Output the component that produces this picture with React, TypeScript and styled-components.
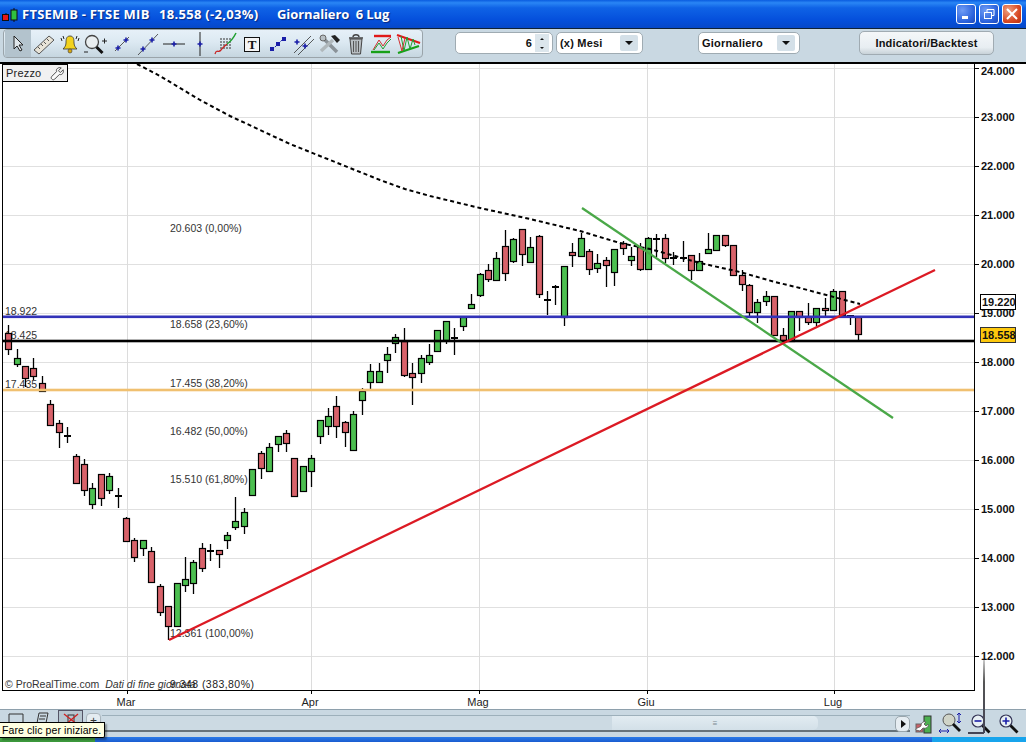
import React from 'react';
import styled, { createGlobalStyle } from 'styled-components';

const Global = createGlobalStyle`
  html, body { margin: 0; padding: 0; background: #fff; overflow: hidden; }
  #root { width: 1026px; height: 742px; }
`;

const Win = styled.div`
  position: relative; width: 1026px; height: 742px; overflow: hidden;
  display: flex; flex-direction: column; background: #fff;
  font-family: "Liberation Sans", Arial, sans-serif;
`;
const TitleBar = styled.header`
  height: 28px; flex: none; display: flex; align-items: center; padding: 0 4px 0 2px; box-sizing: border-box;
  background: linear-gradient(180deg, #0a5ce0 0%, #2a86f5 10%, #0f63e6 28%, #0550dc 70%, #0648c8 100%);
  color: #fff; font: bold 13px "Open Sans", "Noto Sans", sans-serif;
  text-shadow: 1px 1px 1px #0a2a80;
`;
const TitleText = styled.span<{ $w: number; $ls: number }>`
  width: ${p => p.$w}px; flex: none; white-space: pre; letter-spacing: ${p => p.$ls}px;
`;
const WinBtns = styled.div`margin-left: auto; display: flex; gap: 3px;`;
const WinBtn = styled.div<{ $close?: boolean }>`
  width: 20px; height: 20px; box-sizing: border-box; border: 1px solid #fff; border-radius: 3px;
  display: flex; align-items: center; justify-content: center;
  background: ${p => p.$close
    ? 'radial-gradient(circle at 30% 30%, #f0a080, #d84a24 60%, #b83010)'
    : 'radial-gradient(circle at 30% 30%, #6f9cf5, #2b62dc 65%, #1d48b8)'};
`;
const Toolbar = styled.div`
  height: 36px; flex: none; box-sizing: border-box; display: flex; align-items: center; padding: 0 0 5px 3px;
  background: #c9d8e2; border-top: 1px solid #123; border-bottom: 2px solid #000;
`;
const ToolGroup = styled.div`
  width: 420px; height: 29px; box-sizing: border-box; display: flex; align-items: center; padding-left: 1px;
  border: 1px solid #9aa4aa; border-radius: 4px; flex: none; margin-top: 1px;
  background: linear-gradient(180deg, #e6f0f8 0%, #dce9f2 45%, #c6d6e0 100%);
`;
const Tool = styled.div<{ $active?: boolean }>`
  width: 26px; height: 27px; flex: none; display: flex; align-items: center; justify-content: center;
  background: ${p => p.$active ? '#b3c3cd' : 'transparent'};
`;
const Field = styled.div<{ $w: number; $ml: number }>`
  width: ${p => p.$w}px; margin-left: ${p => p.$ml}px; height: 22px; flex: none; box-sizing: border-box;
  display: flex; align-items: center; background: #fff; border: 1px solid #9fabb2; border-radius: 5px;
  font-size: 11px; font-weight: bold; color: #111; padding: 0 3px; letter-spacing: .2px;
`;
const FieldValue = styled.span<{ $right?: boolean }>`
  flex: 1; text-align: ${p => p.$right ? 'right' : 'left'}; padding-right: ${p => p.$right ? '3px' : 0};
`;
const Spin = styled.div`
  width: 14px; height: 18px; flex: none; background: #dce6ec; display: flex; flex-direction: column;
  align-items: center; justify-content: space-around;
`;
const Caret = styled.div`
  width: 18px; height: 16px; flex: none; margin-right: 1px; border-radius: 2px; background: #d4e0e8; display: flex; align-items: center; justify-content: center;
`;
const Tri = styled.i<{ $up?: boolean; $s: number }>`
  display: block; width: 0; height: 0;
  border-left: ${p => p.$s}px solid transparent; border-right: ${p => p.$s}px solid transparent;
  ${p => p.$up ? `border-bottom: ${p.$s}px solid #111;` : `border-top: ${p.$s}px solid #111;`}
`;
const TriRight = styled.i`
  display: block; width: 0; height: 0; margin-left: 2px;
  border-top: 4px solid transparent; border-bottom: 4px solid transparent; border-left: 5px solid #111;
`;
const ActionBtn = styled.div`
  width: 135px; height: 24px; margin-left: 59px; flex: none; box-sizing: border-box; display: flex;
  align-items: center; justify-content: center; border: 1px solid #a0abb2; border-radius: 5px;
  font-size: 11px; font-weight: bold; color: #111; letter-spacing: .2px;
  background: linear-gradient(180deg, #f4f7f9 0%, #e8eef2 70%, #c8d2d8 100%);
`;
const ChartWrap = styled.main`position: relative; height: 645px; flex: none;`;
const ChartSvg = styled.svg`display: block; width: 1026px; height: 645px;`;
const Legend = styled.div`
  position: absolute; left: 2px; top: 0; width: 66px; height: 18px; box-sizing: border-box;
  border: 1px solid #000; background: #f1f1f1; display: flex; align-items: center;
  justify-content: space-between; padding: 0 2px 0 3px; font-size: 11px; color: #222; letter-spacing: .2px;
`;
const BottomBar = styled.footer`
  height: 28px; flex: none; box-sizing: border-box; display: flex; align-items: center; background: #c9d8e2;
  border-top: 1px solid #8ea0ac; padding-left: 3px; gap: 0;
`;
const Tabs = styled.div`display: flex; gap: 2.5px; flex: none;`;
const Tab = styled.div<{ $active?: boolean }>`
  width: 25px; height: 27px; flex: none; display: flex; align-items: flex-start; justify-content: center; padding-top: 2px; box-sizing: border-box;
  ${p => p.$active ? 'background:#b7c6d0; border:1px solid #556;' : ''}
`;
const AddTab = styled.div`
  width: 15px; height: 16px; margin: 0 0 6px 3px; flex: none; background: #e4ecf1; border: 1px solid #aab5bc;
  border-radius: 4px; font-size: 12px; text-align: center; line-height: 14px; color: #333; box-sizing: border-box;
`;
const Track = styled.div`
  flex: none; width: 808px; height: 17px; margin: 0 0 0 1px; box-sizing: border-box; display: flex; align-items: center;
  border-top: 1px solid #9db0bb; border-bottom: 2px solid #66727a; background: #ccdae3; padding-left: 510px;
`;
const Thumb = styled.div`
  width: 206px; height: 14px; background: linear-gradient(180deg,#e2ecf2,#d3e0e8); border-radius: 0 5px 5px 0;
  display: flex; align-items: center; justify-content: center; font-size: 8px; color: #7a8890;
`;
const ArrowBtn = styled.div`
  width: 15px; height: 16px; margin: 0 0 0 -15px; position: relative; flex: none; display: flex; align-items: center; justify-content: center;
  background: #e6edf2; border: 1px solid #9aa6ad; border-radius: 5px; box-sizing: border-box;
`;
const ZoomTools = styled.div`display: flex; align-items: center; margin-left: 3px; gap: 6px;`;
const ZoomTool = styled.div`width: 22px; height: 24px; display: flex; align-items: center; justify-content: center; flex: none;`;
const Taskbar = styled.div`
  height: 5px; flex: none; display: flex;
  background: linear-gradient(180deg, #2a7ae8, #1a5cd0);
`;
const StartBtn = styled.div`width: 95px; background: linear-gradient(180deg,#4fb04f,#3a9a3a);`;
const TrayEdge = styled.div`margin-left: auto; width: 94px; background: #18a4ec;`;
const Tooltip = styled.div`
  position: absolute; left: 0; top: 722px; height: 16px; padding: 0 3px 0 2px; background: #ffffe1; color: #000;
  border: 1px solid #000; border-left: none; font-size: 10.5px; line-height: 14px; white-space: nowrap; box-sizing: border-box;
  box-shadow: 2px 2px 2px rgba(0,0,0,.35); letter-spacing: .1px; border-radius: 0 0 2px 0;
`;
const ShadowV = styled.div`
  position: absolute; left: 983px; top: 660px; width: 2px; height: 73px; background: linear-gradient(180deg,#c8c8c8,#555 30%,#445);
`;
const ShadowH = styled.div`
  position: absolute; left: 968px; top: 732px; width: 16px; height: 2px; background: #445;
`;

const BLUE = '#1a1ea8';
const Ico = ({ w = 22, h = 22, children }: { w?: number; h?: number; children: React.ReactNode }) => (
  <svg width={w} height={h} viewBox={`0 0 ${w} ${h}`} fill="none">{children}</svg>
);
const Mark = ({ x, y }: { x: number; y: number }) => <path d={`M${x - 2.5} ${y}h5M${x} ${y - 2.5}v5`} stroke={BLUE} strokeWidth="1.6" />;

const tools: React.ReactNode[] = [
  <Ico key="a"><path d="M7 3v13l3-3 3 5 2-1-3-5h4z" fill="#dfe6ea" stroke="#222" strokeWidth="1" /></Ico>,
  <Ico key="b" w={24}><path d="M2 17 17 3l5 4L7 21z" fill="#e8e4d8" stroke="#555" /><path d="M6 14l2 2M9 11l2 2M12 9l2 2M15 6l2 2" stroke="#555" /></Ico>,
  <Ico key="c" w={24}><path d="M12 3c-4 0-4 4-4 7 0 3-2 5-3 6h14c-1-1-3-3-3-6 0-3 0-7-4-7z" fill="#f2d21e" stroke="#333" strokeWidth=".8" /><circle cx="12" cy="18" r="2" fill="#d8a810" stroke="#333" strokeWidth=".6" /><path d="M3 5l1 3M5 3l1 3M21 5l-1 3M19 3l-1 3" stroke="#222" /></Ico>,
  <Ico key="d" w={26}><circle cx="9" cy="9" r="6.5" fill="#e9eef0" stroke="#444" strokeWidth="1.3" /><path d="M13.5 14l6 6" stroke="#111" strokeWidth="3" /><path d="M19 8h5M21.5 5.5v5M1 19h4" stroke="#222" /></Ico>,
  <Ico key="e"><path d="M4 18 18 4" stroke="#333" strokeWidth=".8" /><Mark x={7} y={15} /><Mark x={15} y={7} /></Ico>,
  <Ico key="f" w={24}><path d="M2 22 22 1" stroke="#333" strokeWidth=".8" /><Mark x={7} y={16} /><Mark x={16} y={7} /></Ico>,
  <Ico key="g"><path d="M0 11h22" stroke="#222" /><Mark x={11} y={11} /></Ico>,
  <Ico key="h" h={24}><path d="M11 0v24" stroke="#222" /><Mark x={11} y={12} /></Ico>,
  <Ico key="i" w={24} h={24}><path d="M6 7h12M6 10h12M6 13h12M6 16h12" stroke="#333" strokeDasharray="2 1" /><path d="M1 22c2-6 3 0 6-4 2-3 4-4 6-6" stroke="#c82020" strokeWidth="1.3" /><path d="M13 12c3-2 6-5 9-11" stroke="#20a030" strokeWidth="1.5" /></Ico>,
  <Ico key="j" w={20} h={20}><rect x="2.5" y="3.5" width="15" height="14" fill="#f4f4f4" stroke="#111" /><text x="10" y="15" fontFamily="Liberation Serif" fontWeight="bold" fontSize="13" fill="#111" textAnchor="middle">T</text></Ico>,
  <Ico key="k"><path d="M5 17 17 5" stroke="#1a1ea8" strokeDasharray="2 2" /><rect x="3" y="14" width="4" height="4" fill={BLUE} /><rect x="9" y="9" width="4" height="4" fill={BLUE} /><rect x="15" y="4" width="4" height="4" fill={BLUE} /></Ico>,
  <Ico key="l" w={24}><path d="M2 20 19 3M6 22 22 6" stroke="#333" strokeWidth=".8" /><Mark x={13} y={13} /><Mark x={5} y={9} /></Ico>,
  <Ico key="m" w={24}><path d="M4 4l15 15" stroke="#8a9298" strokeWidth="3.5" /><path d="M3 18 15 7" stroke="#b0b8bc" strokeWidth="3.5" /><path d="M13 3l4-1 5 5-3 3z" fill="#222" /><circle cx="5" cy="5" r="3" fill="#b8c0c4" stroke="#666" /></Ico>,
  <Ico key="n" h={24}><path d="M4 6h14M8 5c0-3 6-3 6 0" stroke="#444" strokeWidth="1.4" /><path d="M5 7l1.5 15h9L17 7z" fill="#b8bec2" stroke="#444" /><path d="M8.5 9v11M11 9v11M13.5 9v11" stroke="#555" /></Ico>,
  <Ico key="o" w={25}><path d="M4 3h17" stroke="#e01818" strokeWidth="2.4" /><path d="M1 19h19" stroke="#18a018" strokeWidth="2.4" /><path d="M3 17 9 7l4 6 4-6 4-3" stroke="#d03030" /><path d="M4 17 9 10l4 6 4-6 4-4" stroke="#20a030" /></Ico>,
  <Ico key="p" w={26}><path d="M2 2l23 8" stroke="#e01818" strokeWidth="2.2" /><path d="M3 20l21-7" stroke="#18a018" strokeWidth="2.2" /><path d="M6 3l3 15 3-14 3 12 3-10 2 6" stroke="#20a030" /><path d="M3 4l4 14 3-13" stroke="#d03030" /></Ico>,
];

type C = [number, string, number, number, number, number];
const candles: C[] = [
  [8,'r',325,355,333,349],[17,'g',349,367,358,364],[25,'r',366,387,366,378],[33,'r',358,380,368,376],[42,'r',376,392,383,391],
  [50,'r',400,426,404,425],[59,'r',420,448,423,432],[67,'d',427,443,435,435],[76,'r',454,484,456,483],[84,'r',459,496,464,490],
  [92,'g',483,509,488,504],[101,'r',474,506,474,498],[109,'g',473,494,476,490],[118,'d',488,508,495,495],[126,'r',517,542,518,541],
  [134,'r',538,562,540,557],[143,'g',540,556,540,548],[151,'r',547,583,551,582],[160,'r',584,616,586,612],[168,'r',606,640,606,626],
  [177,'g',583,626,583,626],[185,'g',557,592,579,585],[193,'g',560,594,562,583],[202,'r',543,572,548,568],[210,'d',544,561,550,550],
  [219,'r',550,568,550,554],[227,'g',532,549,535,540],[235,'g',497,530,521,527],[244,'g',508,534,512,526],[252,'g',469,495,469,495],
  [261,'r',451,479,453,468],[269,'g',443,471,447,471],[278,'g',436,452,436,444],[286,'r',430,452,433,443],[294,'r',458,496,458,496],
  [303,'g',466,491,466,491],[311,'g',455,487,458,471],[320,'g',420,444,420,436],[328,'g',408,435,416,426],[336,'r',396,438,406,426],
  [345,'r',421,447,422,432],[353,'g',411,450,414,450],[362,'g',388,415,391,400],[370,'g',364,389,371,382],[379,'g',363,383,371,382],
  [387,'g',347,373,354,360],[395,'g',334,353,337,343],[404,'r',328,377,341,375],[412,'r',363,405,373,377],[421,'g',355,383,358,373],
  [429,'g',344,365,355,362],[437,'g',330,352,330,351],[446,'g',321,344,321,340],[454,'d',328,355,337,337],[463,'g',316,331,317,326],
  [471,'g',294,309,304,308],[480,'g',273,297,274,295],[488,'r',264,282,270,279],[496,'g',252,280,258,280],[505,'r',230,281,246,273],
  [513,'g',238,263,239,261],[522,'r',229,266,229,254],[530,'g',237,263,247,262],[539,'r',235,298,236,294],[547,'d',291,315,299,299],
  [555,'d',285,305,286,286],[564,'g',266,326,266,317],[572,'r',243,267,252,255],[581,'g',233,257,238,256],[589,'r',249,275,251,269],
  [597,'g',254,273,263,268],[606,'r',257,287,260,265],[614,'g',249,286,249,272],[623,'r',241,255,243,248],[631,'g',247,266,256,260],
  [640,'r',243,271,247,269],[648,'g',237,270,238,269],[656,'d',234,257,238,238],[665,'r',234,263,238,258],[673,'d',252,265,257,257],
  [683,'d',241,262,257,257],[691,'r',255,280,255,270],[699,'g',253,270,261,270],[708,'g',233,253,249,253],[716,'g',235,250,235,250],
  [725,'r',235,247,235,245],[733,'r',245,276,245,275],[742,'r',270,291,275,284],[749,'r',284,317,285,312],[757,'g',299,323,302,312],
  [766,'g',291,306,296,301],[774,'r',296,335,296,335],[783,'r',328,342,335,341],[791,'g',311,341,311,341],[799,'r',311,331,311,317],
  [808,'r',303,325,317,322],[816,'g',308,326,308,322],[825,'r',298,316,308,310],[833,'g',289,311,291,310],[842,'r',291,317,291,315],
  [850,'d',315,325,315,315],[858,'r',317,341,317,334],
];
const levels = [24,23,22,21,20,19,18,17,16,15,14,13,12];
const months: [string, number][] = [['Mar',127],['Apr',311],['Mag',479],['Giu',647],['Lug',834]];
const fibs: [string, number][] = [['20.603 (0,00%)',232],['18.658 (23,60%)',328],['17.455 (38,20%)',387],['16.482 (50,00%)',435],['15.510 (61,80%)',483],['12.361 (100,00%)',637]];
const ma = '137,64 160,76 200,100 230,116 260,130 290,144 310,152 340,164 380,180 405,189 430,196 480,208 530,219 580,231 620,243 650,249 700,263 740,272 775,282 800,288 830,296 860,304';

const Chart = () => (
  <ChartSvg viewBox="0 64 1026 645" fontFamily='"Liberation Sans", Arial, sans-serif'>
    {levels.map((l) => { const y = 656 - (l - 12) * 49; return <rect key={l} x={3} y={y} width={971} height={1} fill="#e0e0e0" />; })}
    {months.map(([m, x]) => <rect key={m} x={x} y={64} width={1} height={626} fill="#dcdcdc" />)}
    <g fontSize="10.5" fill="#333">
      <text x={5} y={315}>18.922</text>
      <text x={5} y={339}>18.425</text>
      <text x={5} y={388}>17.435</text>
      {fibs.map(([t, y]) => <text key={t} x={170} y={y}>{t}</text>)}
      <text x={5} y={688}>© ProRealTime.com  <tspan fontStyle="italic" dx="3">Dati di fine giornata</tspan></text>
      <text x={170} y={688} fill="#222" letterSpacing=".45">9.348 (383,80%)</text>
    </g>
    {candles.map(([x, t, wt, wb, bt, bb], i) => t === 'd' ? (
      <g key={i}>
        <line x1={x + .5} y1={wt} x2={x + .5} y2={wb} stroke="#000" strokeWidth="1.3" />
        <rect x={x - 3} y={bt} width={7} height={2} fill="#000" />
      </g>
    ) : (
      <g key={i}>
        <line x1={x + .5} y1={wt} x2={x + .5} y2={wb} stroke="#000" strokeWidth="1.3" />
        <rect x={x - 2.5} y={bt + .5} width={6} height={bb - bt} fill={t === 'r' ? '#d8626a' : '#4cbf50'} stroke="#000" strokeWidth="1.2" />
      </g>
    ))}
    <polyline points={ma} fill="none" stroke="#000" strokeWidth="2" strokeDasharray="4 3" />
    <rect x={3} y={315.5} width={971} height={2.6} fill="#3232b8" />
    <rect x={3} y={339.7} width={971} height={2.6} fill="#000" />
    <rect x={3} y={388.7} width={971} height={2.6} fill="#f0c070" />
    <line x1={582} y1={208} x2={893} y2={418} stroke="#4aa848" strokeWidth="2.3" />
    <line x1={169} y1={640} x2={935} y2={270} stroke="#dc1a24" strokeWidth="2.3" />
    <rect x={2} y={64} width={1} height={626} fill="#000" />
    <rect x={974} y={64} width={1} height={627} fill="#000" />
    <rect x={2} y={690} width={973} height={1} fill="#000" />
    {months.map(([m, x]) => (
      <g key={m}>
        <rect x={x} y={691} width={1} height={3} fill="#000" />
        <text x={x - 1} y={706} fontSize="11" fill="#222" textAnchor="middle">{m}</text>
      </g>
    ))}
    {levels.map((l) => { const y = 656 - (l - 12) * 49; return (
      <g key={l}>
        <rect x={975} y={y} width={4} height={1} fill="#000" />
        <text x={981} y={l === 24 ? 75 : y + 4} fontSize="11" fontWeight="bold" fill="#111">{l}.000</text>
      </g>
    ); })}
    <rect x={980.5} y={294.5} width={35} height={15} fill="#fff" stroke="#000" />
    <text x={982} y={306} fontSize="11" fontWeight="bold" fill="#111">19.220</text>
    <rect x={980.5} y={327.5} width={35} height={15} fill="#fdc80c" stroke="#333" />
    <text x={982} y={339} fontSize="11" fontWeight="bold" fill="#111">18.558</text>
  </ChartSvg>
);

const Wrench = ({ s = 15 }: { s?: number }) => (
  <svg width={s} height={s} viewBox="0 0 16 16" fill="none"><path d="M2 14c-1-1-1-2 0-3l5-5c-1-3 2-5 5-4L9 5l2 2 3-3c1 3-1 6-4 5l-5 5c-1 1-2 1-3 0z" fill="#fafafa" stroke="#444" /></svg>
);
const Mag = ({ sign }: { sign: string }) => (
  <svg width="22" height="22" viewBox="0 0 22 22" fill="none">
    <circle cx="9" cy="8" r="6" fill="#e8f0f4" stroke="#335" strokeWidth="1.2" />
    <path d={sign === '+' ? 'M5.5 8h7M9 4.5v7' : 'M5.5 8h7'} stroke={BLUE} strokeWidth="1.6" />
    <path d="M13.5 12.5l7 7" stroke="#111" strokeWidth="2.8" />
  </svg>
);

export default function App() {
  return (
    <Win>
      <Global />
      <TitleBar>
        <svg width="16" height="19" viewBox="0 0 16 19" style={{ flex: 'none', marginRight: 4 }}>
          <path d="M4 8v8M12 3v14" stroke="#111" />
          <rect x="0.5" y="9.5" width="6" height="6" fill="#e81818" stroke="#111" />
          <rect x="9" y="5" width="6" height="10" fill="#30c040" stroke="#111" />
        </svg>
        <TitleText $w={137} $ls={.25}>FTSEMIB - FTSE MIB</TitleText>
        <TitleText $w={118} $ls={.3}>18.558 (-2,03%)</TitleText>
        <TitleText $w={120} $ls={-.1}>Giornaliero  6 Lug</TitleText>
        <WinBtns>
          <WinBtn><svg width="12" height="12"><rect x="2" y="8" width="6" height="3" fill="#fff" /></svg></WinBtn>
          <WinBtn><svg width="12" height="12" fill="none" stroke="#fff"><rect x="1.5" y="4.5" width="7" height="6" /><path d="M4 4V1.5h7v6H9" /></svg></WinBtn>
          <WinBtn $close><svg width="12" height="12" stroke="#fff" strokeWidth="2"><path d="M1 1l10 10M11 1 1 11" /></svg></WinBtn>
        </WinBtns>
      </TitleBar>
      <Toolbar>
        <ToolGroup>
          {tools.map((t, i) => <Tool key={i} $active={i === 0}>{t}</Tool>)}
        </ToolGroup>
        <Field $w={98} $ml={32}>
          <FieldValue $right>6</FieldValue>
          <Spin><Tri $up $s={2} /><Tri $s={2} /></Spin>
        </Field>
        <Field $w={87} $ml={3}>
          <FieldValue>(x) Mesi</FieldValue>
          <Caret><Tri $s={4} /></Caret>
        </Field>
        <Field $w={102} $ml={55}>
          <FieldValue>Giornaliero</FieldValue>
          <Caret><Tri $s={4} /></Caret>
        </Field>
        <ActionBtn>Indicatori/Backtest</ActionBtn>
      </Toolbar>
      <ChartWrap>
        <Chart />
        <Legend>Prezzo <Wrench /></Legend>
      </ChartWrap>
      <BottomBar>
        <Tabs>
          <Tab><svg width="20" height="12" fill="none" stroke="#333"><path d="M3 2h14v9H3z" /></svg></Tab>
          <Tab><svg width="14" height="12" fill="none" stroke="#333"><path d="M3 1h9l-2 10H1z M4 4h6M3 7h6" /></svg></Tab>
          <Tab $active><svg width="16" height="14" fill="none"><rect x="5" y="2" width="6" height="9" stroke="#333" /><path d="M1 1l14 11M15 1 2 12" stroke="#d02020" strokeWidth="1.3" /></svg></Tab>
        </Tabs>
        <AddTab>+</AddTab>
        <Track><Thumb>≡</Thumb></Track>
        <ArrowBtn><TriRight /></ArrowBtn>
        <ZoomTools>
          <ZoomTool>
            <svg width="22" height="22" viewBox="0 0 22 22"><rect x="3" y="11" width="7" height="8" fill="#c86068" stroke="#666" /><rect x="11" y="3" width="7" height="17" fill="#4cb050" stroke="#333" /><path d="M3 17c-1-2 3-2 5-4 0-3 2-5 5-4l-2 2 2 2 2-2c1 3-2 5-5 4l-3 3z" fill="#fff" stroke="#555" strokeWidth=".8" /></svg>
          </ZoomTool>
          <ZoomTool>
            <svg width="28" height="24" viewBox="1 0 28 24" fill="none" style={{ flex: 'none' }}><circle cx="12" cy="8" r="6" fill="#d0d4c8" stroke="#555" /><path d="M16 12l7 7" stroke="#111" strokeWidth="2.8" /><path d="M22 1v10M20 3l2-2 2 2M20 9l2 2 2-2M2 19h10M4 17l-2 2 2 2M10 17l2 2-2 2" stroke={BLUE} /></svg>
          </ZoomTool>
          <ZoomTool><Mag sign="-" /></ZoomTool>
          <ZoomTool><Mag sign="+" /></ZoomTool>
        </ZoomTools>
      </BottomBar>
      <Taskbar><StartBtn /><TrayEdge /></Taskbar>
      <Tooltip>Fare clic per iniziare.</Tooltip>
      <ShadowV />
      <ShadowH />
    </Win>
  );
}
